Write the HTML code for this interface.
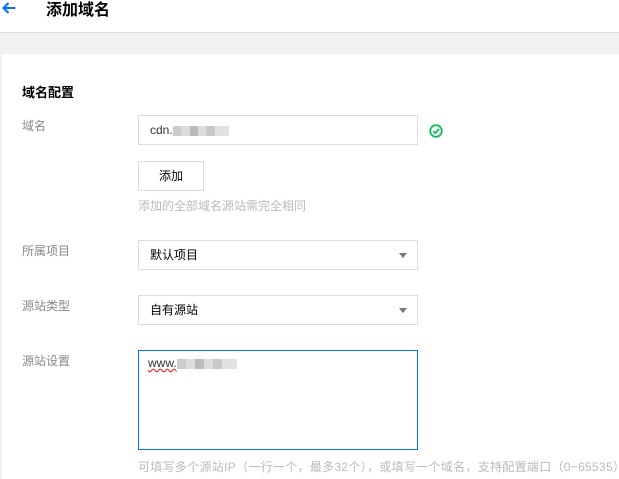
<!DOCTYPE html>
<html><head><meta charset="utf-8"><style>
*{margin:0;padding:0;box-sizing:border-box}
body{width:619px;height:479px;overflow:hidden;background:#f2f2f2;font-family:"Liberation Sans","Noto Sans CJK SC",sans-serif;font-size:12px;color:#000;position:relative}
.hdr{position:absolute;left:0;top:0;width:619px;height:33px;background:#fff;border-bottom:1px solid #ddd}
.panel{position:absolute;left:2px;top:54px;width:617px;height:425px;background:#fff}
.a{position:absolute}
.lbl{position:absolute;left:22px;color:#888;font-size:12px}
.box{position:absolute;left:138px;width:280px;height:30px;border:1px solid #ddd;background:#fff;padding-left:11px;line-height:28px;font-size:12px}
.tri{position:absolute;right:10px;top:12px;width:0;height:0;border-left:4px solid transparent;border-right:4px solid transparent;border-top:5px solid #777}
.hint{position:absolute;left:138px;color:#bbb;font-size:12px}
.blur{display:inline-block;height:10px;vertical-align:middle;background:linear-gradient(90deg,#ccc 0 15%,#ddd 15% 30%,#bbb 30% 45%,#ddd 45% 60%,#c8c8c8 60% 75%,#e2e2e6 75% 100%)}
</style></head><body>
<div class="hdr">
<svg class="a" style="left:2px;top:2px" width="14" height="12" viewBox="0 0 14 12"><path d="M13.5 6H2M6.5 1L1.5 6l5 5" stroke="#006eff" stroke-width="2" fill="none"/></svg>
<div class="a" style="left:46px;top:-4px;font-size:16px;font-weight:bold;color:#000">添加域名</div>
</div>
<div class="panel"></div>
<div class="a" style="left:22px;top:82px;font-size:13px;font-weight:bold">域名配置</div>
<div class="lbl" style="top:117px">域名</div>
<div class="box" style="top:115px;color:#333">cdn.<span class="blur" style="width:56px"></span></div>
<svg class="a" style="left:429px;top:124px" width="14" height="14" viewBox="0 0 14 14"><circle cx="7" cy="7" r="5.8" stroke="#0abf5b" stroke-width="1.8" fill="none"/><path d="M4.2 7.1l2 2 3.8-4" stroke="#0abf5b" stroke-width="1.8" fill="none"/></svg>
<div class="a" style="left:138px;top:161px;width:66px;height:30px;border:1px solid #ddd;text-align:center;line-height:28px">添加</div>
<div class="hint" style="top:197px">添加的全部域名源站需完全相同</div>
<div class="lbl" style="top:242px">所属项目</div>
<div class="box" style="top:240px">默认项目<div class="tri"></div></div>
<div class="lbl" style="top:297px">源站类型</div>
<div class="box" style="top:295px">自有源站<div class="tri"></div></div>
<div class="lbl" style="top:352px">源站设置</div>
<div class="a" style="left:138px;top:350px;width:280px;height:100px;border:1px solid #006eff;padding:4px 9px;line-height:16px;color:#333"><span style="text-decoration:underline wavy #e33">www.</span><span class="blur" style="width:60px"></span></div>
<div class="hint" style="top:458px;white-space:nowrap;letter-spacing:0.3px">可填写多个源站IP（一行一个，最多32个），或填写一个域名，支持配置端口（0~65535）</div>
</body></html>
